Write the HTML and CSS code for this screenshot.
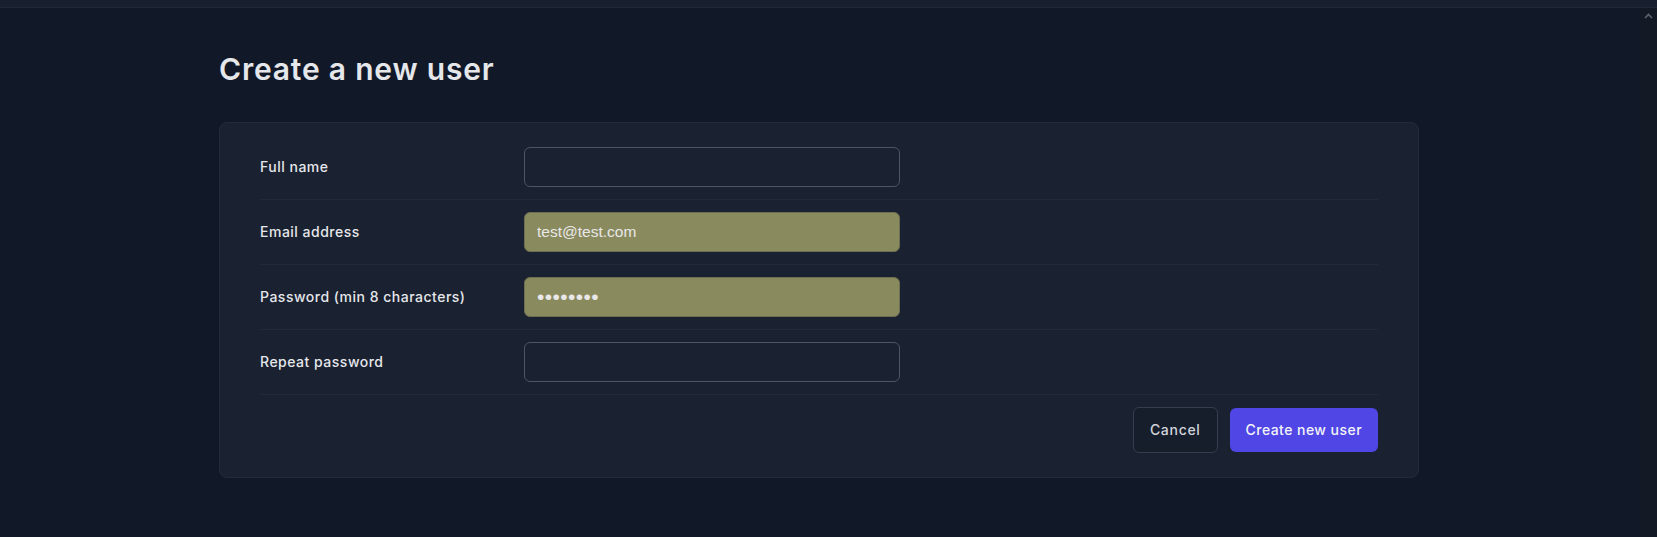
FILE: index.html
```html
<!DOCTYPE html>
<html lang="en">
<head>
<meta charset="utf-8">
<title>Create a new user</title>
<link rel="stylesheet" href="styles.css">
</head>
<body>
<div class="topbar"></div>
<div class="viewport">
  <main class="main">
    <div class="container">
      <h1 class="title">Create a new user</h1>
      <form class="card">
        <div class="row">
          <label class="label" for="name">Full name</label>
          <input class="input" id="name" type="text">
        </div>
        <div class="row">
          <label class="label" for="email">Email address</label>
          <input class="input input-filled" id="email" type="email" value="test@test.com">
        </div>
        <div class="row">
          <label class="label" for="pw">Password (min 8 characters)</label>
          <input class="input input-filled input-password" id="pw" type="password" value="password">
        </div>
        <div class="row">
          <label class="label" for="pw2">Repeat password</label>
          <input class="input" id="pw2" type="password">
        </div>
        <div class="actions">
          <button type="button" class="btn btn-cancel">Cancel</button>
          <button type="button" class="btn btn-primary">Create new user</button>
        </div>
      </form>
    </div>
  </main>
  <div class="scrollbar">
    <svg class="scroll-arrow" width="17" height="17" viewBox="0 0 17 17"><path d="M5 10 L8.5 6.5 L12 10" fill="none" stroke="#5b6270" stroke-width="1.6"/></svg>
  </div>
</div>
</body>
</html>
```

FILE: styles.css
```css
* { box-sizing: border-box; }
html, body { margin: 0; height: 100%; }
body {
  background: #111827;
  font-family: Inter, "Open Sans", sans-serif;
  color: #e5e7eb;
  display: flex;
  flex-direction: column;
  overflow: hidden;
}
.topbar {
  height: 8px;
  flex: none;
  background: #182030;
  border-bottom: 1px solid #1f2939;
}
.viewport {
  flex: 1;
  display: flex;
  min-height: 0;
}
.main {
  flex: 1;
  padding-top: 43px;
  padding-right: 2px;
}
.container {
  max-width: 1200px;
  margin: 0 auto;
}
.title {
  margin: 0 0 35px;
  font-size: 30px;
  line-height: 36px;
  font-weight: 600;
  color: #e5e7eb;
  letter-spacing: 0.8px;
}
.card {
  background: #1a2130;
  border: 1px solid #232b3a;
  border-radius: 8px;
  padding: 12px 40px;
}
.row {
  display: grid;
  grid-template-columns: 264px 376px;
  align-items: center;
  padding: 12px 0;
  border-bottom: 1px solid #222a39;
}
.label {
  font-size: 14px;
  font-weight: 500;
  color: #e5e7eb;
  letter-spacing: 0.5px;
  position: relative;
  top: -1px;
}
.input {
  height: 40px;
  width: 376px;
  border: 1px solid #4b5563;
  border-radius: 6px;
  background: #1a2130;
  padding: 0 12px;
  font-family: "Liberation Sans", Arial, sans-serif;
  font-size: 15.5px;
  color: #e8e8e8;
  outline: none;
}
.input-filled {
  background: #8a8a5f;
  border-color: #6e6e52;
}
.input-password {
  font-size: 21px;
  letter-spacing: 0.4px;
}
.actions {
  display: flex;
  justify-content: flex-end;
  align-items: center;
  gap: 12px;
  padding: 12px 0;
}
.btn {
  font-family: Inter, "Open Sans", sans-serif;
  font-size: 14px;
  font-weight: 500;
  line-height: 20px;
  padding: 12px 16px;
  border-radius: 6px;
  cursor: pointer;
  letter-spacing: 0.45px;
}
.btn-cancel {
  background: #161d2b;
  border: 1px solid #353e4c;
  color: #d1d5db;
  letter-spacing: 0.7px;
}
.btn-primary {
  background: #4f46e5;
  border: none;
  color: #f3f4f6;
}
.scrollbar {
  width: 17px;
  flex: none;
  background: #141a25;
}
.scroll-arrow { display: block; }
```
